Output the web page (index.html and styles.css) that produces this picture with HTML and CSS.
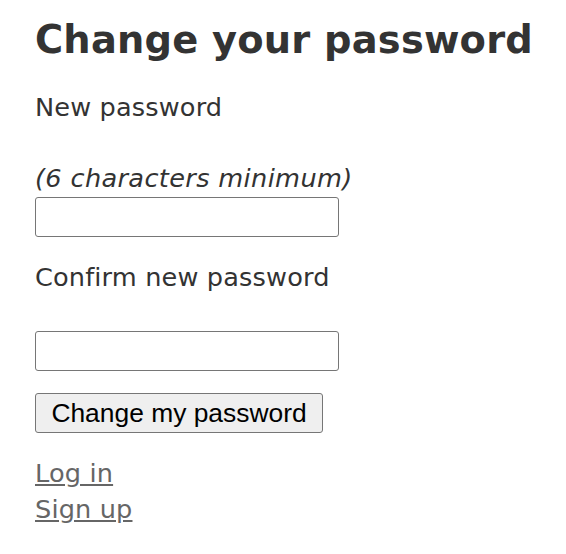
FILE: index.html
```html
<!DOCTYPE html>
<html lang="en">
<head>
<meta charset="utf-8">
<title>Change your password</title>
<link rel="stylesheet" href="styles.css">
</head>
<body>
<main class="page">
  <h1 class="title">Change your password</h1>
  <form class="form">
    <div class="field">
      <label class="label label-spaced" for="pw">New password</label>
      <em class="hint">(6 characters minimum)</em>
      <input class="input input-after-hint" type="password" id="pw">
    </div>
    <div class="field">
      <label class="label label-spaced" for="pwc">Confirm new password</label>
      <input class="input" type="password" id="pwc">
    </div>
    <div class="actions">
      <button class="button" type="button">Change my password</button>
    </div>
    <nav class="links">
      <a class="link" href="#">Log in</a>
      <a class="link" href="#">Sign up</a>
    </nav>
  </form>
</main>
</body>
</html>
```

FILE: styles.css
```css
html, body {
  margin: 0;
  padding: 0;
  background: #ffffff;
}

body {
  font-family: "DejaVu Sans", Verdana, sans-serif;
  font-size: 25.6px;
  line-height: 36px;
  letter-spacing: 0.15px;
  color: #333333;
}

.page {
  padding: 18px 0 0 35px;
}

.title {
  margin: 0 0 27px 0;
  font-size: 38.4px;
  line-height: 44px;
  font-weight: bold;
  letter-spacing: 0.2px;
  white-space: nowrap;
  color: #333333;
}

.form {
  display: flex;
  flex-direction: column;
  align-items: flex-start;
  gap: 22px;
}

.field {
  display: flex;
  flex-direction: column;
  align-items: flex-start;
}

.label {
  display: block;
  line-height: 36px;
}

.label-spaced {
  margin-bottom: 35px;
}

.field:nth-child(2) .label-spaced {
  margin-bottom: 36px;
}

.hint {
  display: block;
  font-style: italic;
  letter-spacing: 0.35px;
  line-height: 36px;
}

.input {
  box-sizing: border-box;
  width: 304px;
  height: 40px;
  margin: 0;
  padding: 2px 3px;
  border: 1px solid #767676;
  border-radius: 3px;
  background: #ffffff;
  font-size: 20px;
}

.input-after-hint {
  margin-top: 1px;
}

.actions {
  display: flex;
}

.button {
  box-sizing: border-box;
  width: 288px;
  height: 40px;
  margin: 0;
  padding: 0;
  border: 1px solid #767676;
  border-radius: 3px;
  background: #efefef;
  color: #000000;
  font-family: "Liberation Sans", Arial, sans-serif;
  font-size: 26.4px;
  letter-spacing: 0;
  line-height: 38px;
}

.links {
  display: flex;
  flex-direction: column;
  align-items: flex-start;
}

.link {
  color: #666666;
  text-decoration: underline;
  line-height: 36px;
}
```
